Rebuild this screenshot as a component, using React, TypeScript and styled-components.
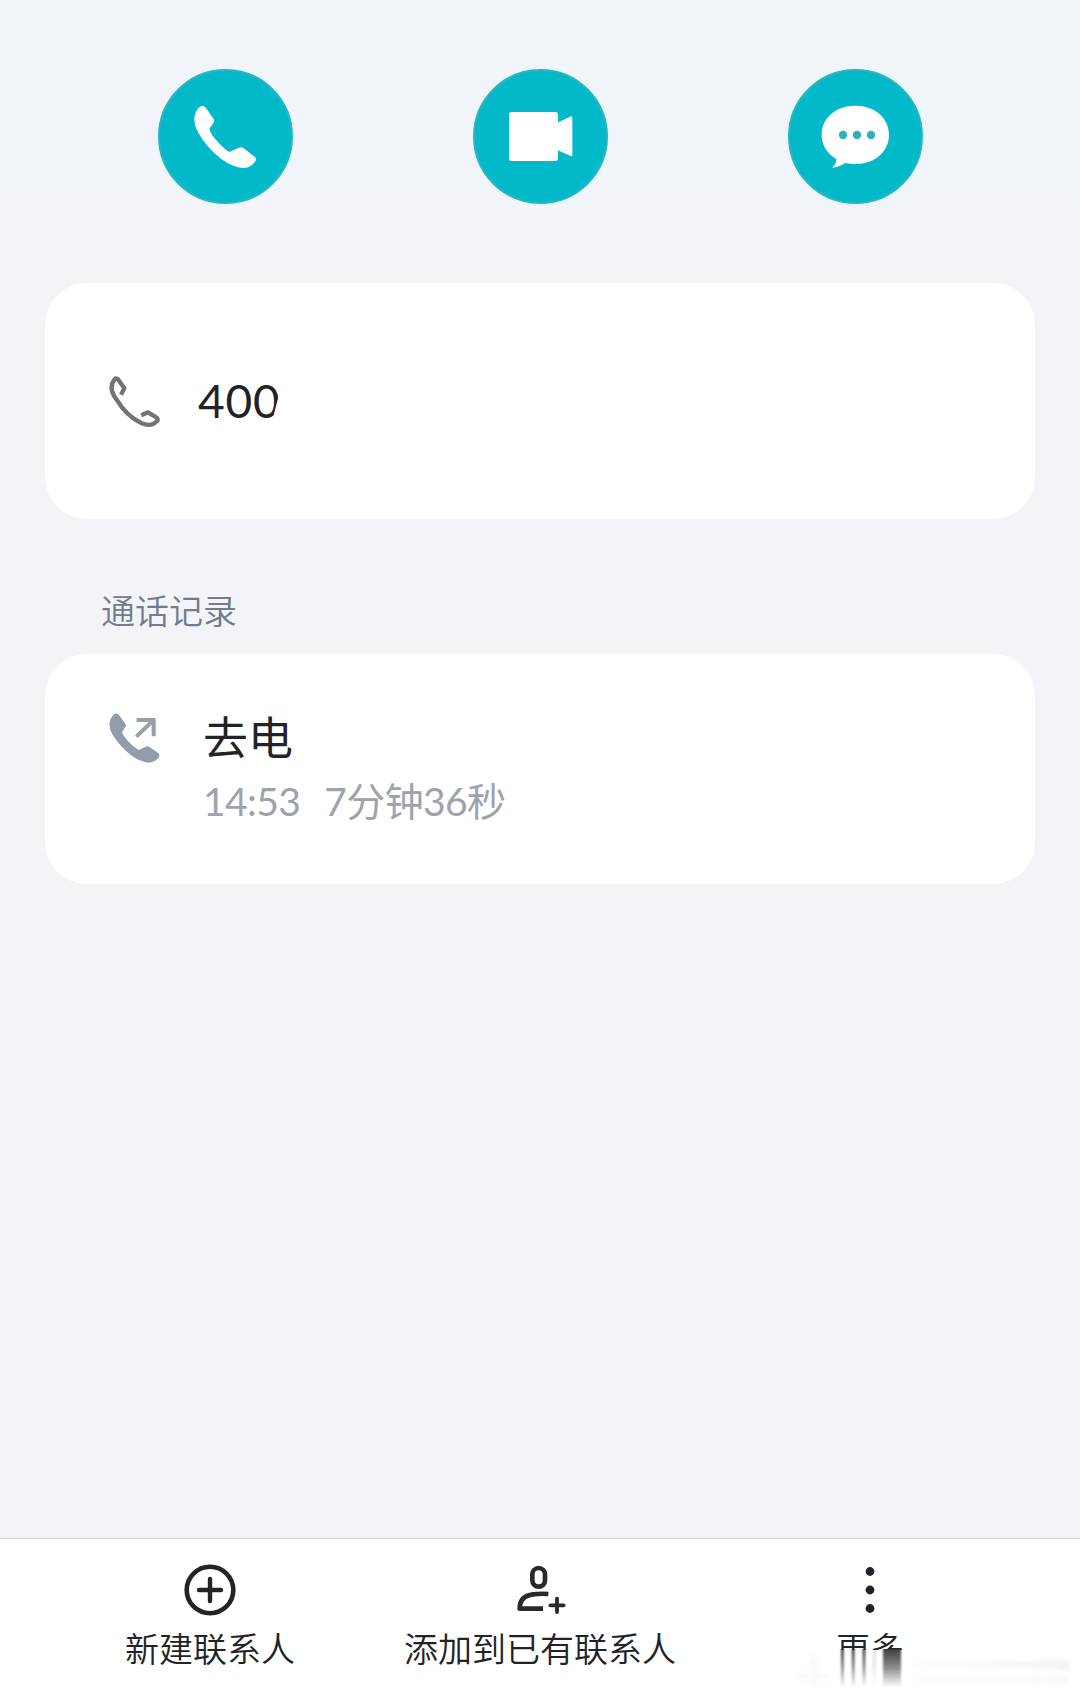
import React from "react";
import styled, { createGlobalStyle } from "styled-components";

const GlobalStyle = createGlobalStyle`
  *, *::before, *::after { box-sizing: border-box; }
  html, body { margin: 0; padding: 0; background: #f2f4f8; }
  body {
    font-family: Lato, "Noto Sans CJK SC", sans-serif;
    color: #222326;
  }
`;

const Screen = styled.main`
  display: flex;
  flex-direction: column;
  width: 1080px;
  height: 1697px;
  overflow: hidden;
  background: linear-gradient(#f1f5f8, #f2f4f8 250px, #f2f4f8);
`;

const Actions = styled.div`
  display: flex;
  justify-content: space-between;
  padding: 69px 157px 79px 158px;
`;

const ActionButton = styled.button`
  width: 135px;
  height: 135px;
  padding: 0;
  border: 2px solid #2fb4bf;
  border-radius: 50%;
  background: #02b9ca;
  box-shadow: 0 0 3px 1px #dcfbfd;

  svg {
    display: block;
    margin: -2px;
  }
`;

const Card = styled.section<{ $height: number }>`
  flex: none;
  display: flex;
  margin: 0 45px;
  height: ${(p) => p.$height}px;
  border-radius: 42px;
  background: #fff;
`;

const NumberRow = styled(Card)`
  align-items: center;
  padding: 1px 64px 0;
  gap: 37px;
`;

const PhoneNumber = styled.span`
  display: flex;
  padding-bottom: 1px;
  font-size: 46px;
  line-height: 60px;
  letter-spacing: 0.8px;
`;

const CutDigit = styled.span`
  clip-path: polygon(0 0, 100% 0, 92% 44%, 76% 72%, 72% 100%, 0 100%);
`;

const SectionTitle = styled.h2`
  margin: 0;
  padding: 65px 101px 19px;
  font-family: "Noto Sans CJK SC", sans-serif;
  font-size: 34px;
  font-weight: 350;
  line-height: 51px;
  color: #727b90;
`;

const CallRow = styled(Card)`
  align-items: flex-start;
  padding: 56px 64px;
  gap: 42px;

  > svg {
    margin-top: 3px;
  }
`;

const CallDetails = styled.div`
  display: flex;
  flex-direction: column;
`;

const CallType = styled.span`
  font-family: "Noto Sans CJK SC", sans-serif;
  font-size: 45px;
  line-height: 52px;
`;

const CallMeta = styled.span`
  display: flex;
  gap: 24px;
  padding-top: 11px;
  font-size: 39px;
  line-height: 56px;
  letter-spacing: -0.6px;
  color: #9da3ae;
`;

const BottomBar = styled.nav`
  display: flex;
  margin-top: auto;
  height: 159px;
  padding: 0 45px;
  border-top: 1px solid #d3d5da;
  background: #fff;
`;

const BarItem = styled.button`
  position: relative;
  flex: 1;
  display: flex;
  flex-direction: column;
  align-items: center;
  gap: 6px;
  padding: 24px 0 0;
  border: 0;
  background: none;
  color: #222326;
`;

const BarLabel = styled.span<{ $visible?: number }>`
  height: ${(p) => p.$visible ?? 50}px;
  overflow: hidden;
  font-family: "Noto Sans CJK SC", sans-serif;
  font-size: 34px;
  font-weight: 350;
  line-height: 50px;
  white-space: nowrap;
`;

const Smear = styled.svg`
  position: absolute;
  left: 90px;
  top: 110px;
  pointer-events: none;
`;

const handset =
  "M174 176 Q186 161 196 172 L220 205 Q224 212 220 219 L208 236 Q211 249 224 265 Q246 292 267 306 L297 293 Q304 290 311 295 L345 321 Q351 327 345 335 Q331 354 309 354 Q278 352 244 327 Q199 291 175 248 Q163 226 163 206 Q164 188 174 176Z";

export default function App() {
  return (
    <>
      <GlobalStyle />
      <Screen>
        <Actions>
          <ActionButton aria-label="语音通话">
            <svg width="135" height="135" viewBox="54 57 405 405">
              <path d={handset} fill="#fff" />
            </svg>
          </ActionButton>
          <ActionButton aria-label="视频通话">
            <svg width="135" height="135" viewBox="54 57 405 405" fill="#fff">
              <rect x="162" y="186" width="147" height="147" rx="8" />
              <path d="M307 218 L348 199 Q352 198 352 203 V315 Q352 320 347 318 L307 300Z" />
            </svg>
          </ActionButton>
          <ActionButton aria-label="发送信息">
            <svg width="135" height="135" viewBox="54 57 405 405">
              <path
                d="M256 167 C315 167 357 204 357 254 C357 304 315 342 256 342 Q240 342 225 339 Q207 352 186 353 Q199 342 199 327 C172 311 155 286 155 254 C155 204 197 167 256 167Z"
                fill="#fff"
              />
              <g fill="#2eb1bd">
                <circle cx="219" cy="255" r="12.5" />
                <circle cx="261" cy="255" r="12.5" />
                <circle cx="303" cy="255" r="12.5" />
              </g>
            </svg>
          </ActionButton>
        </Actions>

        <NumberRow $height={236}>
          <svg width="52" height="52" viewBox="237 316 156 156">
            <path
              d="M273 372 L283 353 L264 326 Q258 320 253 327 C240 344 244 366 260 387 C279 419 307 445 335 458 C355 466 372 462 382 450 Q385 445 379 440 L354 425 L334 434"
              fill="none"
              stroke="#737373"
              strokeWidth="13"
              strokeLinejoin="round"
            />
          </svg>
          <PhoneNumber>
            40<CutDigit>0</CutDigit>
          </PhoneNumber>
        </NumberRow>

        <SectionTitle>通话记录</SectionTitle>

        <CallRow $height={230}>
          <svg width="52" height="52" viewBox="237 400 156 156">
            <path
              d="M248 408 Q258 396 267 406 L286 432 Q289 437 286 442 L276 458 Q280 470 293 483 Q308 500 326 511 L347 501 Q354 498 360 503 L385 521 Q391 528 385 535 Q373 549 354 549 Q330 547 303 527 Q267 498 247 464 Q238 447 238 432 Q239 418 248 408Z"
              fill="#929cab"
            />
            <path d="M320 421 H371 V470 M371 421 L319 471" fill="none" stroke="#999fa9" strokeWidth="12" />
          </svg>
          <CallDetails>
            <CallType>去电</CallType>
            <CallMeta>
              <span>14:53</span>
              <span>7分钟36秒</span>
            </CallMeta>
          </CallDetails>
        </CallRow>

        <BottomBar>
          <BarItem>
            <svg width="54" height="54" viewBox="-27 -27 54 54" fill="none" stroke="#242427" strokeWidth="4.6">
              <circle r="23.3" />
              <path d="M-11 0H11M0 -11V11" strokeLinecap="round" strokeWidth="4.4" />
            </svg>
            <BarLabel>新建联系人</BarLabel>
          </BarItem>
          <BarItem>
            <svg width="54" height="54" viewBox="369 99 162 162" fill="none" stroke="#29292b" strokeWidth="14">
              <rect x="427" y="114" width="38" height="56" rx="19" />
              <path d="M475 192 Q453 190 429 193 C402 196 389 212 389 236 H459" strokeLinejoin="round" />
              <path d="M481 226H521M501 206V246" strokeWidth="11.5" strokeLinecap="round" />
            </svg>
            <BarLabel>添加到已有联系人</BarLabel>
          </BarItem>
          <BarItem>
            <svg width="54" height="54" viewBox="-27 -27 54 54" fill="#20212a">
              <circle cy="-18.5" r="4.4" />
              <circle r="4.4" />
              <circle cy="18.5" r="4.4" />
            </svg>
            <BarLabel $visible={27}>更多</BarLabel>
            <Smear width="285" height="40" viewBox="795 1649 285 40">
              <defs>
                <linearGradient id="drip" x1="0" y1="0" x2="0" y2="1">
                  <stop offset="0" stopColor="#333" stopOpacity="0.95" />
                  <stop offset="0.5" stopColor="#333" stopOpacity="0.55" />
                  <stop offset="1" stopColor="#333" stopOpacity="0" />
                </linearGradient>
                <linearGradient id="trail" x1="0" y1="0" x2="1" y2="0">
                  <stop offset="0" stopColor="#888" stopOpacity="0.01" />
                  <stop offset="1" stopColor="#888" stopOpacity="0.11" />
                </linearGradient>
                <filter id="soft" x="-60%" y="0" width="220%" height="100%">
                  <feGaussianBlur stdDeviation="0.8 0" />
                </filter>
                <filter id="haze" x="-10%" y="-60%" width="120%" height="220%">
                  <feGaussianBlur stdDeviation="2" />
                </filter>
              </defs>
              <g fill="url(#drip)" filter="url(#soft)">
                <rect x="841" y="1649" width="2.8" height="38" />
                <rect x="851.8" y="1649" width="2.8" height="38" />
                <rect x="862.6" y="1649" width="2.8" height="38" />
                <rect x="873" y="1649" width="2.5" height="38" opacity="0.2" />
                <rect x="883" y="1649" width="18" height="38" />
              </g>
              <g filter="url(#haze)">
                <path d="M915 1662 L1069 1660 V1671 L1055 1668 L915 1668Z" fill="url(#trail)" />
                <path d="M915 1677 H1069 V1683 H915Z" fill="url(#trail)" opacity="0.6" />
                <path d="M797 1674H830V1679H797ZM811 1656h6v31h-6Z" fill="#999" opacity="0.06" />
              </g>
            </Smear>
          </BarItem>
        </BottomBar>
      </Screen>
    </>
  );
}
